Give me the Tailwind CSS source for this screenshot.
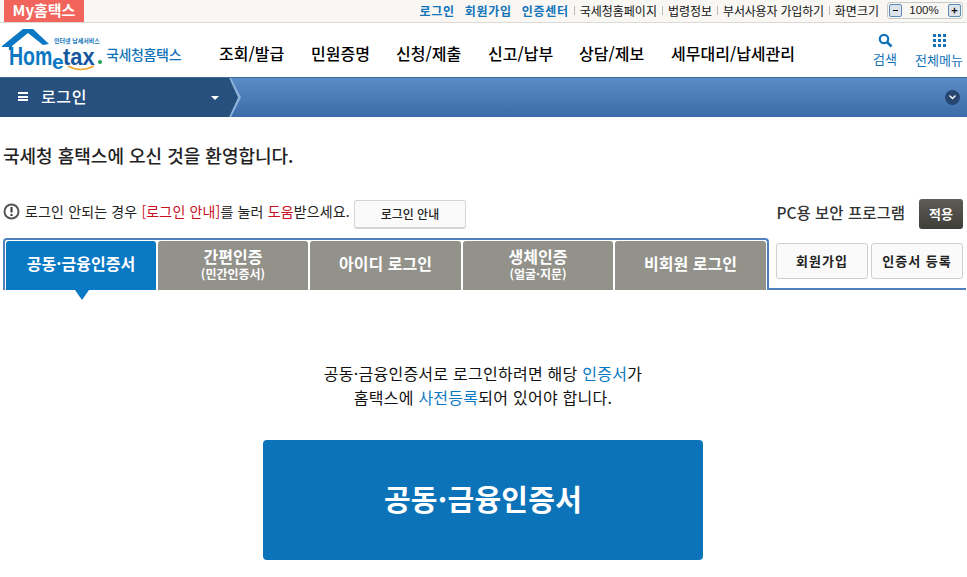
<!DOCTYPE html>
<html lang="ko"><head><meta charset="utf-8">
<script src="https://cdn.jsdelivr.net/npm/@tailwindcss/browser@4"></script>
</head>
<body class="bg-white font-['Noto_Sans_CJK_KR','Liberation_Sans',sans-serif] text-[#111] overflow-hidden">
<div class="w-[967px] h-[577px] overflow-hidden flex flex-col">
  <!-- top bar -->
  <div class="h-[23px] shrink-0 bg-[#f8f7f3] border-b border-[#dcdbd6] flex items-start pl-[4px] pr-[4px]">
    <div class="w-[80px] h-[22px] bg-[#f1655d] text-white font-bold text-[15px] leading-[20px] text-center">My홈택스</div>
    <div class="ml-auto flex items-center h-[21px] text-[12px] leading-none">
      <span class="text-[#1273b9] font-bold tracking-[0.7px]">로그인</span>
      <span class="text-[#1273b9] font-bold tracking-[0.7px] ml-[10px]">회원가입</span>
      <span class="text-[#1273b9] font-bold tracking-[0.7px] ml-[10px]">인증센터</span>
      <span class="w-px h-[9px] bg-[#bbb] ml-[5px] mr-[5px]"></span><span>국세청홈페이지</span>
      <span class="w-px h-[9px] bg-[#bbb] mx-[5px]"></span><span>법령정보</span>
      <span class="w-px h-[9px] bg-[#bbb] mx-[5px]"></span><span class="tracking-[-0.2px]">부서사용자 가입하기</span>
      <span class="w-px h-[9px] bg-[#bbb] mx-[5px]"></span><span>화면크기</span>
      <div class="ml-[8px] w-[76px] h-[17px] border border-[#c9c9c9] rounded-[3px] flex items-center justify-between px-[1px]">
        <span class="w-[13px] h-[13px] border border-[#5c8ab8] bg-[#dde3ea] rounded-[2px] flex items-center justify-center"><span class="w-[5px] h-px bg-black"></span></span>
        <span class="font-['Liberation_Sans',sans-serif] text-[11.5px] text-[#222] pr-[2px]">100%</span>
        <span class="w-[13px] h-[13px] border border-[#5c8ab8] bg-[#dde3ea] rounded-[2px] flex items-center justify-center text-[11px] font-bold leading-none">+</span>
      </div>
    </div>
  </div>
  <!-- header -->
  <div class="h-[54px] shrink-0 flex items-start relative">
    <div class="w-[219px] h-full shrink-0 relative">
      <svg class="absolute left-0 top-0" width="60" height="32" viewBox="0 0 60 32"><path d="M2 23 L23 6 L33 6 L49 21 L43 22 L28 10 L12 23 L12 27 L9 27 L9 24 L2 24 Z" fill="#0a78c2"/></svg>
      <span class="absolute left-[54px] top-[15px] text-[6px] leading-none text-[#1273b9] font-bold whitespace-nowrap">인터넷 납세서비스</span>
      <span class="absolute left-[9px] top-[21px] text-[25px] leading-none font-bold text-[#0a78c2] font-['Liberation_Sans',sans-serif] inline-block origin-left scale-x-[0.78]">Hom</span>
      <span class="absolute left-[52px] top-[28px] text-[21px] leading-none font-bold text-[#0a78c2] font-['Liberation_Sans',sans-serif]">e</span>
      <span class="absolute left-[63px] top-[23px] text-[23px] leading-none font-bold text-[#16569e] font-['Liberation_Sans',sans-serif] inline-block origin-left scale-x-[0.95]">tax</span>
      <span class="absolute left-[98px] top-[37px] w-[4px] h-[4px] rounded-full bg-[#1aa84f]"></span>
      <svg class="absolute left-[66px] top-[42px]" width="30" height="8" viewBox="0 0 30 8"><path d="M2 1 Q14 8 28 1" stroke="#f0a92e" stroke-width="1.5" fill="none"/></svg>
      <span class="absolute left-[106px] top-[21px] text-[14px] leading-[20px] font-medium tracking-[-0.35px] text-[#1273b9] whitespace-nowrap">국세청홈택스</span>
    </div>
    <nav class="flex items-center h-[60px] text-[16px] font-medium text-black whitespace-nowrap">
      <span class="w-[92px]">조회/발급</span><span class="w-[85px]">민원증명</span><span class="w-[92px]">신청/제출</span><span class="w-[91px]">신고/납부</span><span class="w-[92px]">상담/제보</span><span>세무대리/납세관리</span>
    </nav>
    <div class="ml-auto flex text-[13px] text-[#1273b9] pr-[4px]">
      <div class="w-[30px] flex flex-col items-center pt-[10px] mr-[15px]">
        <svg width="15" height="15" viewBox="0 0 15 15"><circle cx="6" cy="6" r="4.2" stroke="#1273b9" stroke-width="2.2" fill="none"/><path d="M9 9 L13.5 13.5" stroke="#1273b9" stroke-width="2.6"/></svg>
        <span class="leading-[16px] mt-[3px]">검색</span>
      </div>
      <div class="w-[48px] flex flex-col items-center pt-[10px]">
        <div class="grid grid-cols-3 gap-[2px] w-[13px] my-px"><i class="w-[3px] h-[3px] bg-[#1273b9]"></i><i class="w-[3px] h-[3px] bg-[#1273b9]"></i><i class="w-[3px] h-[3px] bg-[#1273b9]"></i><i class="w-[3px] h-[3px] bg-[#1273b9]"></i><i class="w-[3px] h-[3px] bg-[#1273b9]"></i><i class="w-[3px] h-[3px] bg-[#1273b9]"></i><i class="w-[3px] h-[3px] bg-[#1273b9]"></i><i class="w-[3px] h-[3px] bg-[#1273b9]"></i><i class="w-[3px] h-[3px] bg-[#1273b9]"></i></div>
        <span class="leading-[16px] mt-[4px] whitespace-nowrap">전체메뉴</span>
      </div>
    </div>
  </div>
  <!-- blue bar -->
  <div class="h-[40px] shrink-0 bg-gradient-to-b from-[#5a8cc6] to-[#3d6ca8] border-t border-[#3f689c] flex items-center relative">
    <div class="w-[231px] h-full bg-[#27507f] flex items-center pl-[18px] text-white relative pb-[2px]">
      <span class="w-[10px] h-[9px] border-y-2 border-white relative flex items-center"><span class="w-full h-[2px] bg-white"></span></span>
      <span class="ml-[13px] text-[16px] font-medium leading-none pb-px tracking-[0.6px]">로그인</span>
      <span class="absolute left-[211px] top-[18px] w-0 h-0 border-x-[4px] border-x-transparent border-t-[4px] border-t-white"></span>
    </div>
    <svg class="absolute left-[229px] top-0" width="13" height="39" viewBox="0 0 13 39"><path d="M0 0 L2 0 L12 19.5 L2 39 L0 39 L9 19.5 Z" fill="#8fb2da"/><path d="M0 0 L9 19.5 L0 39 Z" fill="#27507f"/></svg>
    <span class="absolute left-[945px] top-[12px] w-[15px] h-[15px] rounded-full bg-[#27466f] flex items-center justify-center">
      <svg width="9" height="7" viewBox="0 0 9 7"><path d="M1.5 1.5 L4.5 4.5 L7.5 1.5" stroke="#fff" stroke-width="1.3" fill="none"/></svg>
    </span>
  </div>
  <!-- body -->
  <div class="flex-1 relative">
    <h1 class="pl-[3px] pt-[26px] text-[18px] leading-[24px] font-medium tracking-[0px] text-[#222]">국세청 홈택스에 오신 것을 환영합니다.</h1>
    <div class="mt-[32px] h-[30px] flex items-center pl-[3px] pr-[4px] text-[14px] text-[#222]">
      <svg width="17" height="17" viewBox="0 0 17 17" class="shrink-0 -mt-[5px]"><circle cx="8.5" cy="8.5" r="7" stroke="#555" stroke-width="2" fill="none"/><path d="M8.5 4 V9.5 M8.5 11 V13" stroke="#333" stroke-width="2"/></svg>
      <span class="ml-[5px] whitespace-nowrap -mt-[5px] tracking-[0.15px]">로그인 안되는 경우 <span class="text-[#c8101e]">[로그인 안내]</span>를 눌러 <span class="text-[#c8101e]">도움</span>받으세요.</span>
      <button class="ml-[4px] w-[112px] h-[29px] bg-[#fafafa] border border-[#d5d5d5] rounded-[3px] border-b-2 text-[12px] font-medium text-[#222]">로그인 안내</button>
      <span class="ml-auto text-[15.5px] font-medium text-[#333] -mt-[2px]">PC용 보안 프로그램</span>
      <button class="ml-[14px] w-[44px] h-[30px] bg-gradient-to-b from-[#5d5c56] to-[#3f3e3a] rounded-[3px] text-white text-[13px] font-bold">적용</button>
    </div>
    <!-- tabs -->
    <div class="mt-[9px] ml-[3px] flex">
      <div class="w-[766px] h-[52px] border-2 border-b-0 border-[#4d80bc] rounded-t-[4px] flex gap-[2px] pl-[1px] pt-[1px] pr-[1px] relative">
        <div class="w-[150px] bg-[#0a79c4] rounded-t-[3px] text-white font-bold text-[16px] flex items-center justify-center relative pb-[6px]">공동·금융인증서<span class="absolute left-[69px] top-[49px] w-0 h-0 border-x-[7px] border-x-transparent border-t-[10px] border-t-[#0a79c4]"></span></div>
        <div class="w-[150px] bg-[#92918a] rounded-t-[3px] text-white font-bold text-[16px] flex flex-col items-center justify-center leading-[18px] pb-[2px]">간편인증<span class="text-[12px] leading-[18px]">(민간인증서)</span></div>
        <div class="w-[151px] bg-[#92918a] rounded-t-[3px] text-white font-bold text-[16px] flex items-center justify-center pb-[6px]">아이디 로그인</div>
        <div class="w-[150px] bg-[#92918a] rounded-t-[3px] text-white font-bold text-[16px] flex flex-col items-center justify-center leading-[18px] pb-[2px]">생체인증<span class="text-[12px] leading-[18px]">(얼굴·지문)</span></div>
        <div class="flex-1 bg-[#92918a] rounded-t-[3px] text-white font-bold text-[16px] flex items-center justify-center pb-[6px]">비회원 로그인</div>
      </div>
      <div class="flex-1 h-[52px] border-b-2 border-[#4d80bc] flex gap-[3px] pt-[5px] pl-[7px] pr-[1px] mr-[1px]">
        <button class="w-[92px] h-[36px] bg-[#fafafa] border border-[#cfcfcf] rounded-[3px] text-[13px] tracking-[1px] font-bold text-[#222]">회원가입</button>
        <button class="w-[92px] h-[36px] bg-[#fafafa] border border-[#cfcfcf] rounded-[3px] text-[13px] tracking-[1px] font-bold text-[#222]">인증서 등록</button>
      </div>
    </div>
    <!-- content -->
    <div class="pt-[71px] pr-[1px] flex flex-col items-center text-[16px] tracking-[0.25px] leading-[24px] text-[#111] text-center">
      <p>공동·금융인증서로 로그인하려면 해당 <span class="text-[#0a79c4]">인증서</span>가<br>홈택스에 <span class="text-[#0a79c4]">사전등록</span>되어 있어야 합니다.</p>
      <button class="mt-[31px] w-[440px] h-[120px] bg-[#0d73b9] rounded-[4px] text-white font-bold text-[29px] pb-[4px]">공동·금융인증서</button>
    </div>
  </div>
</div>
</body></html>
